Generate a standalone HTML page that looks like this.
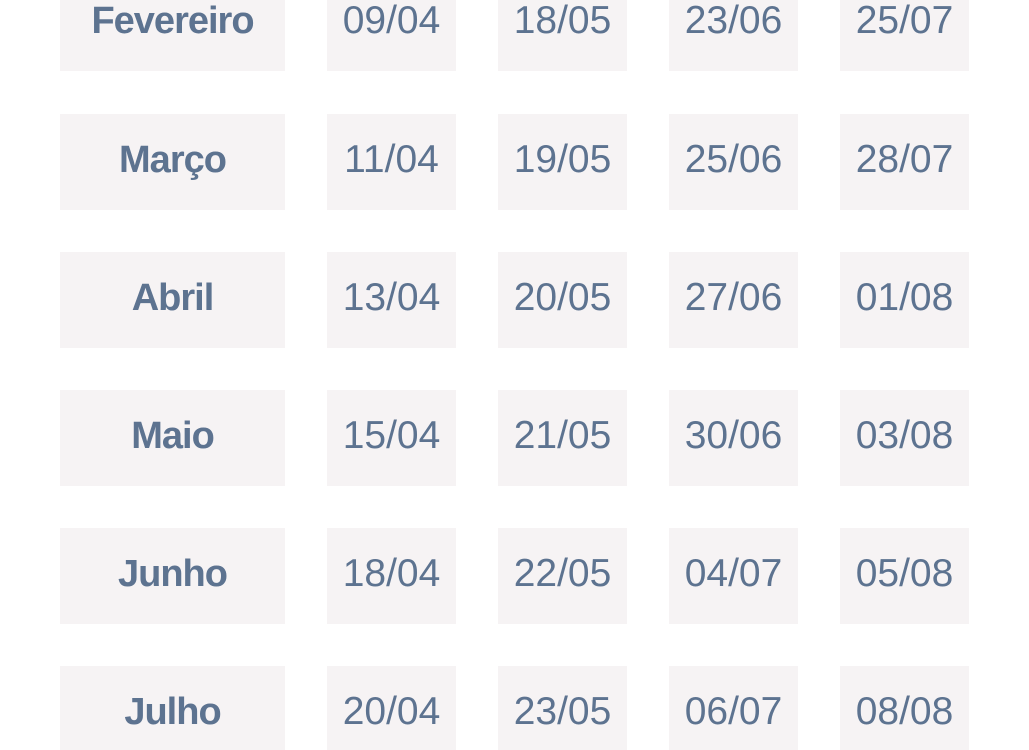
<!DOCTYPE html>
<html><head><meta charset="utf-8"><style>
html,body{margin:0;padding:0;background:#fff;width:1029px;height:750px;overflow:hidden;position:relative;font-family:"Liberation Sans",sans-serif;color:#5d7390}
.b{position:absolute;background:#f6f3f4;height:96px;display:flex;align-items:center;justify-content:center;box-sizing:border-box;padding-bottom:4px}
.m{left:60px;width:225px;font-weight:bold;font-size:38px;letter-spacing:-1px}
.d{width:129px;font-size:39px}
.c1{left:327px}.c2{left:498px}.c3{left:669px}.c4{left:840px}
</style></head><body>
<div class="b m" style="top:-25px">Fevereiro</div><div class="b d c1" style="top:-25px">09/04</div><div class="b d c2" style="top:-25px">18/05</div><div class="b d c3" style="top:-25px">23/06</div><div class="b d c4" style="top:-25px">25/07</div>
<div class="b m" style="top:114px">Março</div><div class="b d c1" style="top:114px">11/04</div><div class="b d c2" style="top:114px">19/05</div><div class="b d c3" style="top:114px">25/06</div><div class="b d c4" style="top:114px">28/07</div>
<div class="b m" style="top:252px">Abril</div><div class="b d c1" style="top:252px">13/04</div><div class="b d c2" style="top:252px">20/05</div><div class="b d c3" style="top:252px">27/06</div><div class="b d c4" style="top:252px">01/08</div>
<div class="b m" style="top:390px">Maio</div><div class="b d c1" style="top:390px">15/04</div><div class="b d c2" style="top:390px">21/05</div><div class="b d c3" style="top:390px">30/06</div><div class="b d c4" style="top:390px">03/08</div>
<div class="b m" style="top:528px">Junho</div><div class="b d c1" style="top:528px">18/04</div><div class="b d c2" style="top:528px">22/05</div><div class="b d c3" style="top:528px">04/07</div><div class="b d c4" style="top:528px">05/08</div>
<div class="b m" style="top:666px">Julho</div><div class="b d c1" style="top:666px">20/04</div><div class="b d c2" style="top:666px">23/05</div><div class="b d c3" style="top:666px">06/07</div><div class="b d c4" style="top:666px">08/08</div>
</body></html>
